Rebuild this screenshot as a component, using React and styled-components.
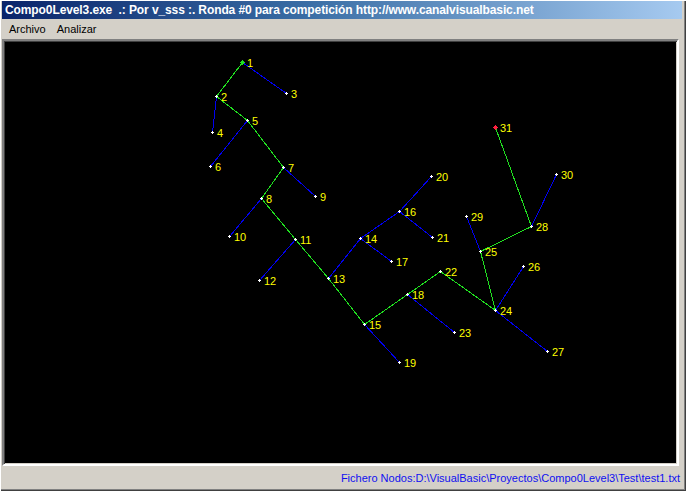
import React from "react";
import styled, { createGlobalStyle } from "styled-components";

const Global = createGlobalStyle`
  html, body { margin: 0; padding: 0; background: #D4D0C8; }
  #root { width: 686px; height: 491px; }
`;

const Window = styled.div`
  box-sizing: border-box;
  width: 686px;
  height: 491px;
  background: #D4D0C8;
  display: flex;
  flex-direction: column;
  padding: 1px 0 2px 0;
  box-shadow: inset 1px 1px 0 #FFFFFF, inset -1px -1px 0 #404040, inset -2px -2px 0 #808080;
  font-family: "Liberation Sans", Arial, sans-serif;
`;

const TitleBar = styled.div`
  height: 18px;
  margin: 0 4px 0 2px;
  background: linear-gradient(to right, #0A246A 0%, #3A6EA5 45%, #A6CAF0 100%);
  display: flex;
  align-items: center;
  padding-left: 3px;
`;

const TitleText = styled.span`
  color: #FFFFFF;
  font-weight: bold;
  font-size: 12px;
  white-space: pre;
  letter-spacing: -0.1px;
`;

const MenuBar = styled.div`
  height: 20px;
  display: flex;
  align-items: center;
  padding-left: 9px;
  gap: 11px;
`;

const MenuItem = styled.span`
  font-size: 11px;
  color: #000000;
`;

const Canvas = styled.div`
  box-sizing: border-box;
  height: 427px;
  margin: 0 7px 0 2px;
  background: #000000;
  border-style: solid;
  border-width: 2px;
  border-color: #808080 #FFFFFF #FFFFFF #808080;
  box-shadow: inset 1px 1px 0 #404040, inset -1px -1px 0 #D4D0C8;
  display: flex;
`;

const GraphSvg = styled.svg`
  display: block;
  width: 673px;
  height: 423px;
`;

const StatusBar = styled.div`
  flex: 1;
  display: flex;
  align-items: center;
  justify-content: flex-end;
  padding-right: 6px;
`;

const StatusText = styled.span`
  font-size: 11px;
  color: #1010F0;
  white-space: nowrap;
`;

const nodes = {
  1: [242, 62], 2: [216, 96], 3: [286, 93], 4: [212, 132], 5: [247, 120],
  6: [210, 166], 7: [283, 167], 8: [261, 198], 9: [315, 196], 10: [229, 236],
  11: [295, 239], 12: [259, 280], 13: [328, 278], 14: [360, 238], 15: [364, 324],
  16: [399, 211], 17: [391, 261], 18: [407, 294], 19: [399, 362], 20: [431, 176],
  21: [432, 237], 22: [440, 271], 23: [454, 332], 24: [495, 310], 25: [480, 251],
  26: [523, 266], 27: [547, 351], 28: [531, 226], 29: [466, 216], 30: [556, 174],
  31: [495, 127],
};

const green = [
  [1, 2], [2, 5], [5, 7], [7, 8], [8, 11], [11, 13], [13, 15], [15, 18],
  [18, 22], [22, 24], [24, 25], [25, 28], [28, 31],
];
const blue = [
  [1, 3], [2, 4], [5, 6], [7, 9], [8, 10], [11, 12], [13, 14], [14, 16],
  [16, 20], [16, 21], [14, 17], [15, 19], [18, 23], [24, 26], [24, 27],
  [28, 30], [25, 29],
];

function Edge({ a, b, color }) {
  const [x1, y1] = nodes[a];
  const [x2, y2] = nodes[b];
  return (
    <line x1={x1 + 0.5} y1={y1 + 0.5} x2={x2 + 0.5} y2={y2 + 0.5} stroke={color} strokeWidth="1" />
  );
}

function Cross({ x, y, color, big }) {
  if (big) {
    return (
      <g fill={color}>
        <rect x={x - 2} y={y} width={5} height={1} />
        <rect x={x} y={y - 2} width={1} height={5} />
        <rect x={x - 1} y={y - 1} width={3} height={3} />
      </g>
    );
  }
  return (
    <g fill={color}>
      <rect x={x - 1} y={y} width={3} height={1} />
      <rect x={x} y={y - 1} width={1} height={3} />
    </g>
  );
}

export default function App() {
  return (
    <>
      <Global />
      <Window>
        <TitleBar>
          <TitleText>Compo0Level3.exe  .: Por v_sss :. Ronda #0 para competición http://www.canalvisualbasic.net</TitleText>
        </TitleBar>
        <MenuBar>
          <MenuItem>Archivo</MenuItem>
          <MenuItem>Analizar</MenuItem>
        </MenuBar>
        <Canvas>
          <GraphSvg viewBox="4 41 673 423" shapeRendering="crispEdges">
            {blue.map(([a, b]) => (
              <Edge key={`b${a}-${b}`} a={a} b={b} color="#0000F0" />
            ))}
            {green.map(([a, b]) => (
              <Edge key={`g${a}-${b}`} a={a} b={b} color="#20E020" />
            ))}
            {Object.entries(nodes).map(([id, [x, y]]) => {
              const n = Number(id);
              const color = n === 1 ? "#20E020" : n === 31 ? "#FF2040" : "#FFFFFF";
              return <Cross key={`c${id}`} x={x} y={y} color={color} big={n === 1 || n === 31} />;
            })}
            {Object.entries(nodes).map(([id, [x, y]]) => (
              <text
                key={`t${id}`}
                x={x + 5}
                y={y + 5}
                fill="#FFFF00"
                fontFamily='"Liberation Sans", Arial, sans-serif'
                fontSize="11"
                textRendering="optimizeSpeed"
              >
                {id}
              </text>
            ))}
          </GraphSvg>
        </Canvas>
        <StatusBar>
          <StatusText>Fichero Nodos:D:\VisualBasic\Proyectos\Compo0Level3\Test\test1.txt</StatusText>
        </StatusBar>
      </Window>
    </>
  );
}
